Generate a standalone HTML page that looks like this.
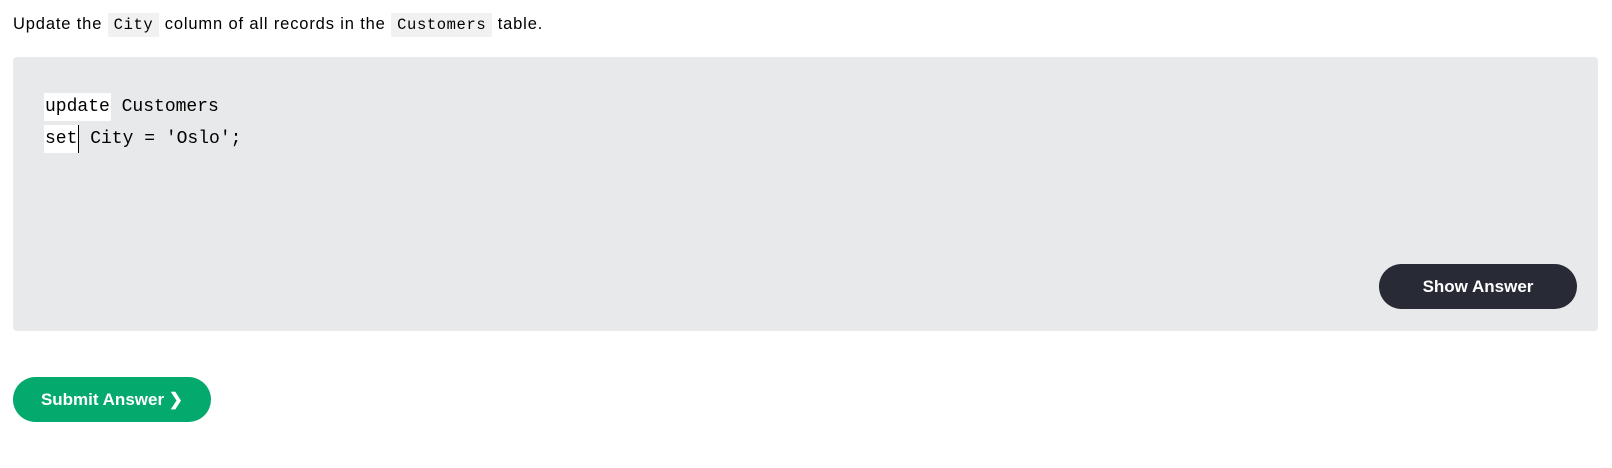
<!DOCTYPE html>
<html><head><style>
body{margin:0;background:#fff;width:1612px;height:468px;position:relative;font-family:"Liberation Sans",sans-serif;color:#000}
.p{position:absolute;left:13px;top:12px;font-size:16.5px;line-height:24px;letter-spacing:0.85px}
.p code{font-family:"Liberation Mono",monospace;font-size:15.5px;background:#f1f1f1;padding:3px 6px;letter-spacing:0.6px}
.box{position:absolute;left:13px;top:57px;width:1585px;height:274px;background:#e8e9eb;border-radius:4px}
.code{position:absolute;left:44px;top:91px;font-family:"Liberation Mono",monospace;font-size:18px;line-height:32px;color:#000;white-space:pre}
.hl{background:#fff;padding:4px 1px}
.cur{border-right:1.5px solid #000}
.btn{position:absolute;height:45px;border-radius:23px;color:#fff;font-weight:bold;font-size:17px;line-height:45px;text-align:center;width:198px}
</style></head><body>
<div class="p">Update the <code>City</code> column of all records in the <code>Customers</code> table.</div>
<div class="box"></div>
<div class="code"><span class="hl">update</span> Customers
<span class="hl cur">set</span> City = 'Oslo';</div>
<div class="btn" style="left:1379px;top:264px;background:#282a35">Show Answer</div>
<div class="btn" style="left:13px;top:377px;background:#04aa6d">Submit Answer ❯</div>
</body></html>
